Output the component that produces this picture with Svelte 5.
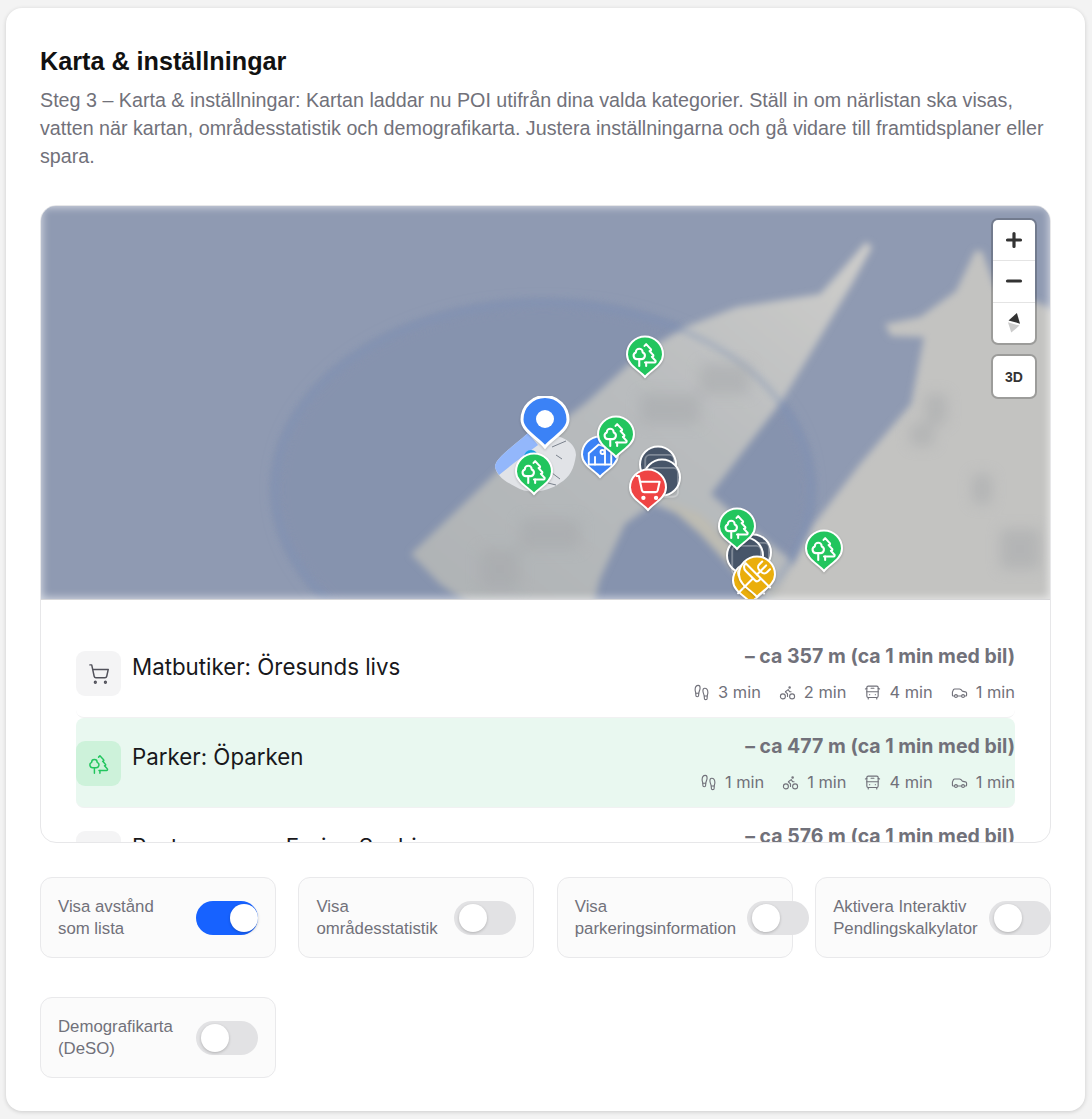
<script>
  const trees = `<path d="M10 10v.2A3 3 0 0 1 8.9 16H5a3 3 0 0 1-1-5.8V10a3 3 0 0 1 6 0Z"/><path d="M7 16v6"/><path d="M13 19v3"/><path d="M12 19h8.3a1 1 0 0 0 .7-1.7L18 14h.3a1 1 0 0 0 .7-1.7L16 9h.2a1 1 0 0 0 .8-1.7L13 3l-1.4 1.5"/>`;
  const cart = `<circle cx="8" cy="21" r="1"/><circle cx="19" cy="21" r="1"/><path d="M2.05 2.05h2l2.66 12.42a2 2 0 0 0 2 1.58h9.78a2 2 0 0 0 1.95-1.57l1.65-7.43H5.12"/>`;
  const feet = `<path d="M4 16v-2.38C4 11.5 2.97 10.5 3 8c.03-2.72 1.49-6 4.5-6C9.37 2 10 3.8 10 5.5c0 3.11-2 5.66-2 8.68V16a2 2 0 1 1-4 0Z"/><path d="M20 20v-2.38c0-2.12 1.03-3.12 1-5.62-.03-2.72-1.49-6-4.5-6C14.63 6 14 7.8 14 9.5c0 3.11 2 5.66 2 8.68V20a2 2 0 1 0 4 0Z"/><path d="M16 17h4"/><path d="M4 13h4"/>`;
  const bike = `<circle cx="18.5" cy="17.5" r="3.5"/><circle cx="5.5" cy="17.5" r="3.5"/><circle cx="15" cy="5" r="1"/><path d="M12 17.5V14l-3-3 4-3 2 3h2"/>`;
  const bus = `<path d="M4 6 2 7"/><path d="M10 6h4"/><path d="m22 7-2-1"/><rect width="16" height="16" x="4" y="3" rx="2"/><path d="M4 11h16"/><path d="M8 15h.01"/><path d="M16 15h.01"/><path d="M6 19v2"/><path d="M18 19v2"/>`;
  const car = `<path d="M19 17h2c.6 0 1-.4 1-1v-3c0-.9-.7-1.7-1.5-1.9C18.7 10.6 16 10 16 10s-1.3-1.4-2.2-2.3c-.5-.4-1.1-.7-1.8-.7H5c-.6 0-1.1.4-1.4.9l-1.4 2.9A3.7 3.7 0 0 0 2 12v4c0 .6.4 1 1 1h2"/><circle cx="7" cy="17" r="2"/><path d="M9 17h6"/><circle cx="17" cy="17" r="2"/>`;
  const crossed = `<path d="m16 2-2.3 2.3a3 3 0 0 0 0 4.2l1.8 1.8a3 3 0 0 0 4.2 0L22 8"/><path d="M15 15 3.3 3.3a4.2 4.2 0 0 0 0 6l7.3 7.3c.7.7 2 .7 2.8 0L15 15Zm0 0 7 7"/><path d="m2.1 21.8 6.4-6.3"/><path d="m19 5-7 7"/>`;
  const house = `<path d="M3 20V11L11 4l5 2v14"/><path d="M3 20h18"/><path d="M21 11v9"/><path d="M8 20v-6"/><circle cx="14" cy="10" r="1.6"/>`;

  const G = '#22c55e', D = '#475569', Y = '#eaae0c';
  const markers = [
    { x: 645, y: 337, c: G, i: trees },
    { x: 600, y: 437, c: '#3b82f6', i: house, s: 1.25, sw: 1.5 },
    { x: 616, y: 417, c: G, i: trees },
    { x: 534, y: 454, c: G, i: trees },
    { x: 658, y: 447, c: D, i: `<rect width="18" height="18" x="4" y="6" rx="3"/>`, round: true, s: 1.6, sw: 1.2, o: .3 },
    { x: 662, y: 460, c: D, i: `<rect width="18" height="18" x="4" y="6" rx="3"/>`, round: true, s: 1.6, sw: 1.2, o: .3 },
    { x: 648, y: 470, c: '#ef4444', i: cart },
    { x: 753, y: 535, c: D, i: `<rect width="18" height="18" x="4" y="6" rx="3"/>`, round: true, s: 1.6, sw: 1.2, o: .3 },
    { x: 745, y: 538, c: D, i: `<rect width="18" height="18" x="4" y="6" rx="3"/>`, round: true, s: 1.6, sw: 1.2, o: .3 },
    { x: 737, y: 509, c: G, i: trees },
    { x: 824, y: 531, c: G, i: trees },
    { x: 751, y: 563, c: Y, i: crossed, s: 1.3, sw: 1.6 },
    { x: 757, y: 557, c: Y, i: crossed, s: 1.3, sw: 1.6 }
  ];

  const rows = [
    { title: 'Matbutiker: Öresunds livs', dist: '– ca 357 m (ca 1 min med bil)', icon: cart, t: ['3 min', '2 min', '4 min', '1 min'] },
    { title: 'Parker: Öparken', dist: '– ca 477 m (ca 1 min med bil)', icon: trees, t: ['1 min', '1 min', '4 min', '1 min'], on: true },
    { title: 'Restauranger: Enrico Sushi', dist: '– ca 576 m (ca 1 min med bil)', icon: crossed, t: ['1 min', '1 min', '4 min', '1 min'] }
  ];
  const modes = [feet, bike, bus, car];

  const toggles = [
    { label: 'Visa avstånd som lista', on: true },
    { label: 'Visa områdesstatistik' },
    { label: 'Visa parkeringsinformation' },
    { label: 'Aktivera Interaktiv Pendlingskalkylator' },
    { label: 'Demografikarta (DeSO)' }
  ];

  function iconTransform(m) {
    const s = m.s || 1.15;
    return `translate(${20 - 12 * s} ${19.5 - 12 * s}) scale(${s})`;
  }
</script>

<main class="card">
  <h1>Karta &amp; inställningar</h1>
  <p class="lead">Steg 3 – Karta &amp; inställningar: Kartan laddar nu POI utifrån dina valda kategorier. Ställ in om närlistan ska visas, vatten när kartan, områdesstatistik och demografikarta. Justera inställningarna och gå vidare till framtidsplaner eller spara.</p>

  <section class="panel">
    <div class="map">
      <svg class="base" viewBox="41 207 1009 393" preserveAspectRatio="none" aria-hidden="true">
        <defs>
          <filter id="b" x="-10%" y="-10%" width="120%" height="120%"><feGaussianBlur stdDeviation="3.5" /></filter>
          <filter id="b2" x="-20%" y="-20%" width="140%" height="140%"><feGaussianBlur stdDeviation="7" /></filter>
          <filter id="b3" x="-20%" y="-20%" width="140%" height="140%"><feGaussianBlur stdDeviation="3" /></filter>
          <linearGradient id="fin" x1="0" y1="1" x2="1" y2="0">
            <stop offset="0" stop-color="#aeb2b4" />
            <stop offset=".55" stop-color="#b9bcbe" />
            <stop offset="1" stop-color="#cfcecb" />
          </linearGradient>
        </defs>
        <rect x="0" y="180" width="1100" height="450" fill="#8f9ab2" />
        <g filter="url(#b2)">
          <ellipse cx="543" cy="490" rx="268" ry="186" fill="#8693ae" />
        </g>
        <g filter="url(#b3)" opacity=".7">
          <ellipse cx="543" cy="490" rx="268" ry="186" fill="none" stroke="#7f8eae" stroke-width="8" />
        </g>
        <g filter="url(#b)">
          <path d="M411 555 L500 470 L588 402 L640 355 L685 328 L737 308 L820 295 L838 275 L866 243 L872 248 L852 285 L840 305 L812 352 L782 402 L745 450 L711 495 L745 525 L790 560 L800 610 L769 610 L737 538 L690 520 L653 505 L625 525 L600 580 L590 620 L490 620 L440 585Z" fill="url(#fin)" />
          <path d="M770 610 L814 525 L860 465 L911 405 L924 338 L891 337 L885 325 L920 318 L956 292 L975 252 L982 252 L995 288 L1060 312 L1060 610Z" fill="#c3c3c1" />
          <path d="M660 500 L700 515 L780 590 L760 600 L700 535Z" fill="#bdbcb3" />
        </g>
        <g filter="url(#b3)" opacity=".4">
          <ellipse cx="543" cy="490" rx="268" ry="186" fill="none" stroke="#8798b8" stroke-width="6" />
        </g>
        <g filter="url(#b2)" fill="#a5a7aa" opacity=".5">
          <rect x="925" y="395" width="22" height="30" />
          <rect x="910" y="425" width="24" height="22" />
          <rect x="972" y="475" width="20" height="30" />
          <rect x="640" y="395" width="60" height="30" />
          <rect x="520" y="520" width="60" height="30" />
          <rect x="700" y="365" width="50" height="30" />
          <rect x="480" y="550" width="40" height="40" />
          <rect x="1000" y="530" width="40" height="40" />
        </g>
        <path d="M495 467 C497 458 510 450 528 434 L552 436 C566 438 576 446 576 456 C574 470 570 478 560 484 C548 493 528 496 516 488 C504 482 496 476 495 467Z" fill="#e1e3e7" />
        <path d="M495 467 C497 458 510 450 528 434 L538 446 L514 464 L499 476 C497 473 495 470 495 467Z" fill="#93b7fb" />
        <path d="M552 448 l14 -6 M556 456 l6 4 M552 474 l8 6 M548 484 l8 2 M544 440 l8 -2" stroke="#7a818c" stroke-width="1" fill="none" />
        <circle cx="531" cy="458" r="7" fill="#1aa0e6" />
      </svg>

      <div class="edge"></div>

      {#each markers as m}
        <svg class="marker" style="left:{m.x - 20 - 41}px;top:{m.y - 1 - 207}px" viewBox="0 0 40 44" width="40" height="44" aria-hidden="true">
          {#if m.round}
            <circle cx="20" cy="19.5" r="18" fill={m.c} stroke="#fff" stroke-width="2" />
          {:else}
            <path d="M20 42 C14 35 2 30 2 19.5 A18 18 0 0 1 38 19.5 C38 30 26 35 20 42Z" fill={m.c} stroke="#fff" stroke-width="2" />
          {/if}
          <g transform={iconTransform(m)} fill="none" stroke="#fff" stroke-opacity={m.o || 1} stroke-width={m.sw || 1.8} stroke-linecap="round" stroke-linejoin="round">{@html m.i}</g>
        </svg>
      {/each}

      <svg class="marker user" viewBox="0 0 50 54" width="50" height="54" aria-hidden="true">
        <path d="M25 51 C18 42 2 35 2 23.5 A23 23 0 0 1 48 23.5 C48 35 32 42 25 51Z" fill="#3b82f6" stroke="#fff" stroke-width="3" />
        <circle cx="25" cy="23" r="9" fill="#fff" />
      </svg>

      <div class="ctrl zoom">
        <button aria-label="Zooma in"><svg viewBox="0 0 20 20" width="20" height="20"><path d="M3.5 10h13M10 3.5v13" stroke="#333" stroke-width="3.2" stroke-linecap="round" /></svg></button>
        <button aria-label="Zooma ut"><svg viewBox="0 0 20 20" width="20" height="20"><path d="M3.5 10h13" stroke="#333" stroke-width="3.2" stroke-linecap="round" /></svg></button>
        <button aria-label="Kompass"><svg viewBox="0 0 20 24" width="20" height="24"><g transform="rotate(16 10 12)"><path d="M10 1.5 L16 11 H4Z" fill="#333" /><path d="M10 22 L16 13 H4Z" fill="#ccc" /></g></svg></button>
      </div>
      <button class="ctrl three">3D</button>
    </div>

    <div class="list">
      {#each rows as r}
        <div class="row" class:on={r.on}>
          <span class="ico"><svg viewBox="0 0 24 24" width="22" height="22" fill="none" stroke="currentColor" stroke-width="1.6" stroke-linecap="round" stroke-linejoin="round">{@html r.icon}</svg></span>
          <div class="title">{r.title}</div>
          <div class="info">
            <div class="dist">{r.dist}</div>
            <div class="times">
              {#each r.t as t, i}
                <span class="time"><svg viewBox="0 0 24 24" width="17" height="17" fill="none" stroke="currentColor" stroke-width="1.6" stroke-linecap="round" stroke-linejoin="round">{@html modes[i]}</svg>{t}</span>
              {/each}
            </div>
          </div>
        </div>
      {/each}
    </div>
  </section>

  <section class="toggles">
    {#each toggles as t}
      <div class="opt">
        <span class="lbl">{t.label}</span>
        <span class="sw" class:on={t.on}><i></i></span>
      </div>
    {/each}
  </section>
</main>

<style>
  :global(body) {
    margin: 0;
    background: #f3f3f3;
    font-family: "Liberation Sans", Arial, sans-serif;
  }
  .card {
    box-sizing: border-box;
    width: 1079px;
    height: 1103px;
    margin: 8px 0 8px 6px;
    padding: 34px;
    background: #fff;
    border-radius: 16px;
    box-shadow: 0 1px 4px rgba(0, 0, 0, .16);
  }
  h1 {
    margin: 3px 0 0;
    font-size: 25.2px;
    line-height: 32px;
    font-weight: 700;
    color: #111;
  }
  .lead {
    margin: 9px 0 0;
    font-size: 19.7px;
    line-height: 28px;
    color: #71717a;
  }
  .panel {
    box-sizing: border-box;
    margin-top: 35px;
    height: 638px;
    border: 1px solid #e7e7e9;
    border-radius: 16px;
    overflow: hidden;
    background: #fff;
  }
  .map {
    position: relative;
    height: 393px;
    overflow: hidden;
    border-bottom: 1px solid #d6d6d8;
  }
  .base {
    position: absolute;
    inset: 0;
    width: 100%;
    height: 100%;
    display: block;
  }
  .edge {
    position: absolute;
    inset: 0;
    box-shadow: inset 0 0 9px 1px rgba(255, 255, 255, .65);
  }
  .marker {
    position: absolute;
    filter: drop-shadow(0 1px 1px rgba(0, 0, 0, .2));
  }
  .user {
    left: 479px;
    top: 190px;
  }
  .ctrl {
    position: absolute;
    left: 952px;
    width: 42px;
    box-sizing: border-box;
    background: #fff;
    border: 0;
    border-radius: 5px;
    box-shadow: 0 0 0 2px rgba(0, 0, 0, .2);
    padding: 0;
  }
  .zoom {
    top: 14px;
    height: 123px;
    display: flex;
    flex-direction: column;
  }
  .zoom button {
    flex: 1;
    display: flex;
    align-items: center;
    justify-content: center;
    background: none;
    border: 0;
    padding: 0;
  }
  .zoom button + button {
    border-top: 1px solid #e4e4e4;
  }
  .three {
    top: 150px;
    height: 41px;
    font: 700 14px "Liberation Sans", Arial, sans-serif;
    color: #333;
  }
  .list {
    height: 243px;
    overflow: hidden;
    padding: 28px 35px 0;
    box-sizing: border-box;
  }
  .row {
    position: relative;
    height: 90px;
    box-sizing: border-box;
    display: flex;
    align-items: flex-start;
    padding-top: 23px;
    border-bottom: 1px solid #f1f1f2;
    border-radius: 8px;
  }
  .row.on {
    background: #e9f8f0;
  }
  .ico {
    flex: none;
    width: 45px;
    height: 45px;
    border-radius: 9px;
    background: #f4f4f5;
    color: #52525b;
    display: flex;
    align-items: center;
    justify-content: center;
  }
  .row.on .ico {
    background: #cdf2da;
    color: #22c55e;
  }
  .title {
    margin: 1px 0 0 11px;
    flex: 1;
    font-family: Inter, sans-serif;
    font-size: 22.3px;
    line-height: 30px;
    color: #18181b;
  }
  .info {
    margin-top: -9px;
    text-align: right;
    color: #71717a;
  }
  .dist {
    font-family: Inter, sans-serif;
    font-weight: 700;
    font-size: 19.5px;
    line-height: 28px;
  }
  .times {
    margin-top: 12px;
    display: flex;
    justify-content: flex-end;
    gap: 18px;
    font-family: Inter, sans-serif;
    font-size: 16.4px;
    line-height: 20px;
  }
  .time {
    display: flex;
    align-items: center;
    gap: 8px;
  }
  .toggles {
    margin-top: 34px;
    display: grid;
    grid-template-columns: repeat(4, 1fr);
    column-gap: 22.5px;
    row-gap: 39px;
  }
  .opt {
    box-sizing: border-box;
    min-width: 0;
    height: 81px;
    padding: 0 17px;
    display: flex;
    align-items: center;
    justify-content: space-between;
    gap: 11px;
    background: #fbfbfb;
    border: 1px solid #e9e9eb;
    border-radius: 12px;
  }
  .lbl {
    font-size: 16.8px;
    line-height: 22px;
    color: #71717a;
  }
  .sw {
    flex: none;
    position: relative;
    width: 62px;
    height: 34px;
    border-radius: 17px;
    background: #e2e2e4;
  }
  .sw.on {
    background: #1762ff;
  }
  .sw i {
    position: absolute;
    left: 5px;
    top: 3px;
    width: 28px;
    height: 28px;
    border-radius: 50%;
    background: #fff;
    box-shadow: 0 1px 3px rgba(0, 0, 0, .22);
  }
  .sw.on i {
    left: 34px;
  }
</style>
